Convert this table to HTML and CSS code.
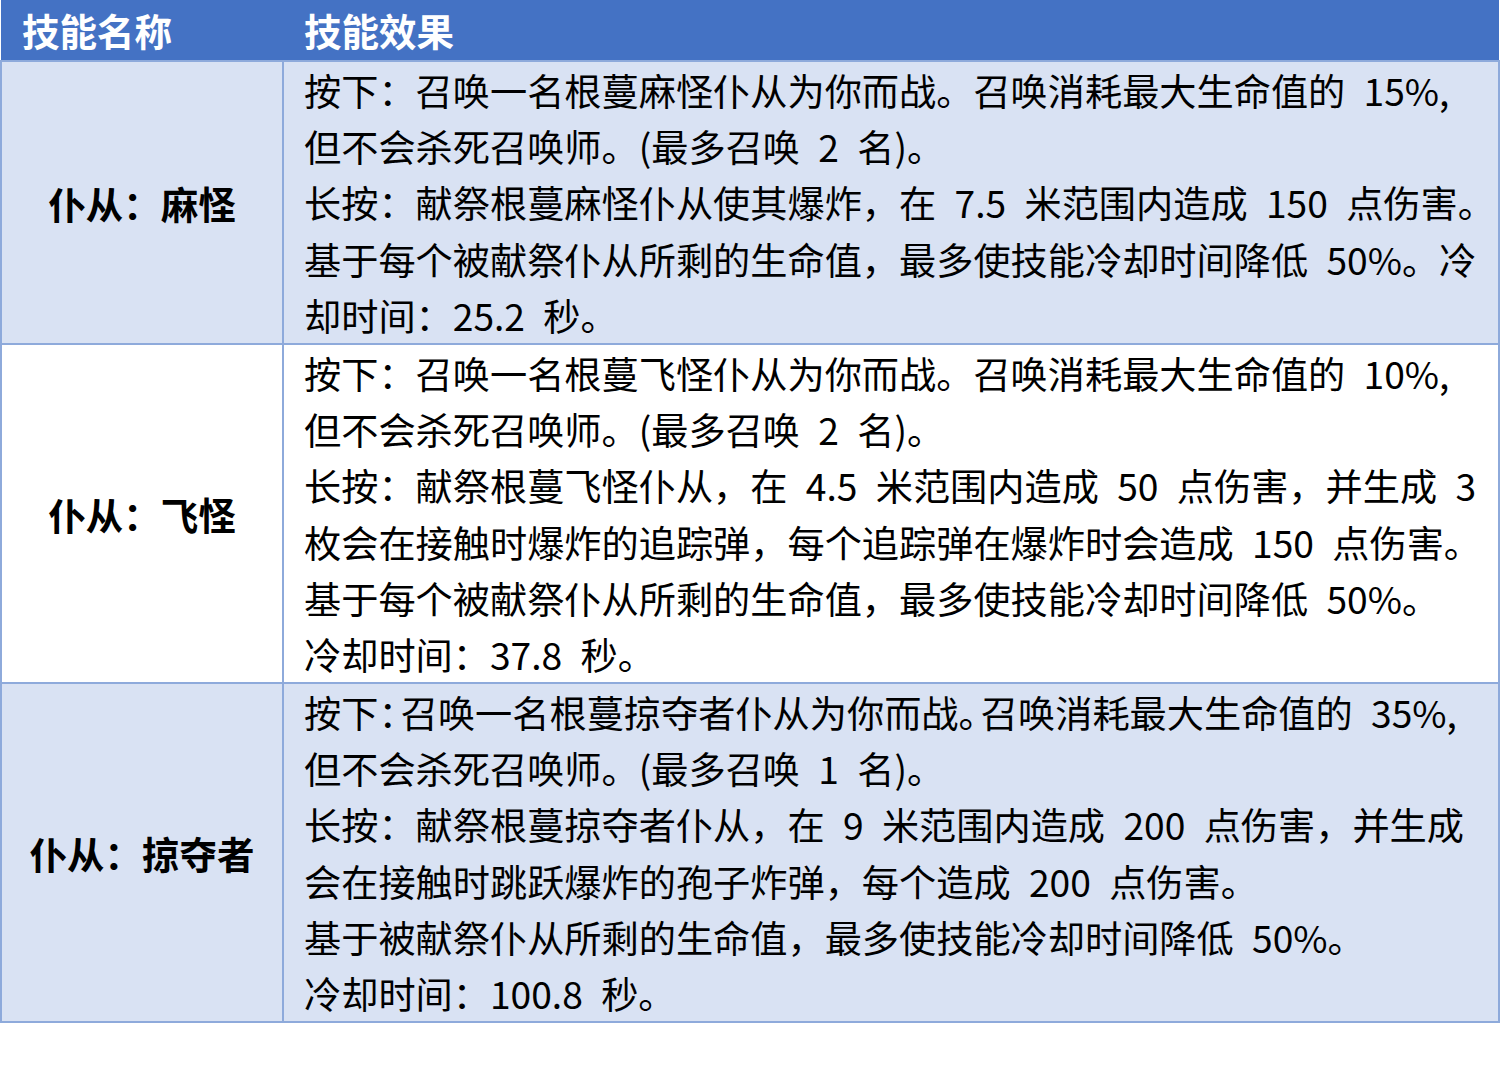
FILE: index.html
```html
<!DOCTYPE html>
<html lang="zh-CN">
<head>
<meta charset="utf-8">
<link rel="stylesheet" href="styles.css">
</head>
<body>
<table class="skills">
  <thead>
    <tr>
      <th class="name-col">技能名称</th>
      <th class="effect-col">技能效果</th>
    </tr>
  </thead>
  <tbody>
    <tr class="row-tint">
      <td class="name">仆从：麻怪</td>
      <td class="effect">
        <div class="line">按下：召唤一名根蔓麻怪仆从为你而战。召唤消耗最大生命值的 15%,</div>
        <div class="line">但不会杀死召唤师。(最多召唤 2 名)。</div>
        <div class="line">长按：献祭根蔓麻怪仆从使其爆炸，在 7.5 米范围内造成 150 点伤害。</div>
        <div class="line">基于每个被献祭仆从所剩的生命值，最多使技能冷却时间降低 50%。冷</div>
        <div class="line">却时间：25.2 秒。</div>
      </td>
    </tr>
    <tr class="row-plain">
      <td class="name">仆从：飞怪</td>
      <td class="effect">
        <div class="line">按下：召唤一名根蔓飞怪仆从为你而战。召唤消耗最大生命值的 10%,</div>
        <div class="line">但不会杀死召唤师。(最多召唤 2 名)。</div>
        <div class="line">长按：献祭根蔓飞怪仆从，在 4.5 米范围内造成 50 点伤害，并生成 3</div>
        <div class="line">枚会在接触时爆炸的追踪弹，每个追踪弹在爆炸时会造成 150 点伤害。</div>
        <div class="line">基于每个被献祭仆从所剩的生命值，最多使技能冷却时间降低 50%。</div>
        <div class="line">冷却时间：37.8 秒。</div>
      </td>
    </tr>
    <tr class="row-tint">
      <td class="name">仆从：掠夺者</td>
      <td class="effect">
        <div class="line">按下<span class="tight">：</span>召唤一名根蔓掠夺者仆从为你而战<span class="tight">。</span>召唤消耗最大生命值的 35%,</div>
        <div class="line">但不会杀死召唤师。(最多召唤 1 名)。</div>
        <div class="line">长按：献祭根蔓掠夺者仆从，在 9 米范围内造成 200 点伤害，并生成</div>
        <div class="line">会在接触时跳跃爆炸的孢子炸弹，每个造成 200 点伤害。</div>
        <div class="line">基于被献祭仆从所剩的生命值，最多使技能冷却时间降低 50%。</div>
        <div class="line">冷却时间：100.8 秒。</div>
      </td>
    </tr>
  </tbody>
</table>
</body>
</html>
```
FILE: styles.css
```css
html, body {
  margin: 0;
  padding: 0;
  background: #ffffff;
}

body {
  font-family: "Noto Sans CJK SC", "Noto Sans", sans-serif;
  color: #000000;
}

.skills {
  border-collapse: collapse;
  width: 1500px;
  table-layout: fixed;
}

.skills th {
  background: #4472c4;
  color: #ffffff;
  font-weight: bold;
  font-size: 37.5px;
  text-align: left;
  height: 60px;
  padding: 0 0 0 21px;
  line-height: 60px;
  border: 0;
  box-sizing: border-box;
}

.skills .name-col {
  width: 282px;
}

.skills td {
  border: 2px solid #8eaadb;
  vertical-align: middle;
  padding: 0;
}

.row-tint td {
  background: #d9e2f3;
}

.row-plain td {
  background: #ffffff;
}

.name {
  text-align: center;
  font-weight: bold;
  font-size: 37.5px;
}

.effect {
  padding: 0 0 0 20px !important;
  font-size: 37.2px;
}

.line {
  white-space: nowrap;
  height: 56.2px;
  line-height: 56.2px;
  word-spacing: 10px;
}

.tight {
  letter-spacing: -0.4em;
}
```
